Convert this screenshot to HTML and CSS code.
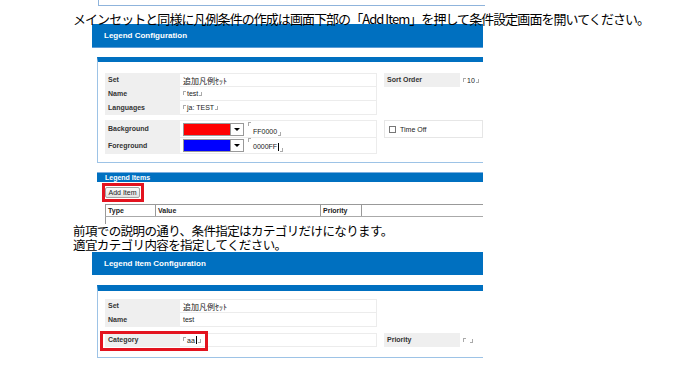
FILE: index.html
```html
<!DOCTYPE html>
<html lang="ja">
<head>
    <meta charset="UTF-8">
    <meta name="viewport" content="width=device-width, initial-scale=1.0">
    <title>凡例条件の作成</title>
    <link rel="stylesheet" href="styles.css">
</head>
<body>
    <div class="frame"></div>
    <p class="note note-top">メインセットと同様に凡例条件の作成は画面下部の「Add Item」を押して条件設定画面を開いてください。</p>

    <div class="shot">
        <div class="page-bar">Legend Configuration</div>
        <div class="panel panel-set">
            <div class="grid">
                <div class="group">
                    <div class="row"><div class="lbl">Set</div><div class="val"><span class="jp">追加凡例ｾｯﾄ</span></div></div>
                    <div class="row"><div class="lbl">Name</div><div class="val"><span class="field"><i class="mk-o"></i>test<i class="mk-c"></i></span></div></div>
                    <div class="row"><div class="lbl">Languages</div><div class="val"><span class="field"><i class="mk-o"></i>ja: TEST<i class="mk-c"></i></span></div></div>
                </div>
                <div class="group group-r">
                    <div class="row row-r"><div class="lbl">Sort Order</div><div class="val plain"><span class="field"><i class="mk-o"></i>10<i class="mk-c"></i></span></div></div>
                </div>
                <div class="group">
                    <div class="row tall">
                        <div class="lbl">Background</div>
                        <div class="val">
                            <span class="picker"><span class="swatch red"></span><span class="drop"></span></span>
                            <span class="field field-tall"><i class="mk-o"></i><span class="txt">FF0000</span><i class="mk-c"></i></span>
                        </div>
                    </div>
                    <div class="row tall">
                        <div class="lbl">Foreground</div>
                        <div class="val">
                            <span class="picker"><span class="swatch blue"></span><span class="drop"></span></span>
                            <span class="field field-tall"><i class="mk-o"></i><span class="txt">0000FF<span class="caret"></span></span><i class="mk-c"></i></span>
                        </div>
                    </div>
                </div>
                <div class="group group-r">
                    <div class="check-cell"><span class="box"></span>Time Off</div>
                </div>
            </div>
        </div>

        <div class="items">
            <div class="items-bar">Legend Items</div>
            <div class="hilite"><button type="button" class="btn">Add Item</button></div>
            <div class="table">
                <div class="thead">
                    <span>Type</span>
                    <span>Value</span>
                    <span>Priority</span>
                    <span class="last"></span>
                </div>
                <div class="tbody"></div>
            </div>
        </div>
    </div>

    <div class="note note-mid">
        <div class="line">前項での説明の通り、条件指定はカテゴリだけになります。</div>
        <div class="line">適宜カテゴリ内容を指定してください。</div>
    </div>

    <div class="shot">
        <div class="page-bar bar-two">Legend Item Configuration</div>
        <div class="panel panel-item">
            <div class="grid grid-item">
                <div class="group">
                    <div class="row"><div class="lbl">Set</div><div class="val"><span class="jp">追加凡例ｾｯﾄ</span></div></div>
                    <div class="row"><div class="lbl">Name</div><div class="val">test</div></div>
                </div>
                <div class="group group-r"></div>
                <div class="group">
                    <div class="row cat-row">
                        <div class="lbl">Category</div>
                        <div class="val"><span class="field"><i class="mk-o"></i>aa<span class="caret"></span><i class="mk-c"></i></span></div>
                        <span class="hilite-box"></span>
                    </div>
                </div>
                <div class="group group-r">
                    <div class="row row-r"><div class="lbl">Priority</div><div class="val plain"><span class="field"><i class="mk-o"></i>&nbsp;<i class="mk-c"></i></span></div></div>
                </div>
            </div>
        </div>
    </div>
</body>
</html>
```

FILE: styles.css
```css
body {
    margin: 0;
    background: #fff;
    font-family: "Liberation Sans", Arial, sans-serif;
    color: #333;
}

/* 上端に見えている前の画面の枠 */
.frame {
    margin-left: 98px;
    width: 386px;
    height: 5px;
    border-left: 1px solid #8fb4dc;
    border-bottom: 1px solid #8fb4dc;
}

.note {
    margin: 0 0 0 73px;
    color: #000;
    font-family: "Noto Sans CJK JP", sans-serif;
    font-size: 13px;
    white-space: nowrap;
}
.note-top {
    margin-top: 6px;
    height: 12px;
    line-height: 13px;
    letter-spacing: -0.95px;
}
.note-mid {
    font-size: 12.5px;
    letter-spacing: -0.6px;
}
.note-mid .line {
    height: 14px;
    line-height: 14px;
}

.shot {
    margin-left: 92px;
    width: 391px;
}

.page-bar {
    height: 23px;
    padding-left: 12px;
    background: #0070c0;
    border-bottom: 1px solid #5b9bd5;
    color: #fff;
    font-weight: bold;
    font-size: 8px;
    line-height: 23px;
}
.bar-two {
    border-bottom: none;
}

.panel {
    margin-left: 5px;
    border-top: 5px solid #0070c0;
    border-left: 1px solid #9dc3e6;
    border-bottom: 1px solid #9dc3e6;
}
.panel-item {
    margin-top: 10px;
    border-top-width: 6px;
}
.panel-set {
    margin-top: 9px;
}

.grid {
    display: grid;
    grid-template-columns: 272px 1fr;
    column-gap: 7px;
    row-gap: 5px;
    padding: 11px 0 8px 7px;
}
.grid-item {
    row-gap: 6px;
    padding: 8px 0 10px 7px;
}

.group {
    display: flex;
    flex-direction: column;
    align-self: start;
}

.row {
    display: grid;
    grid-template-columns: 75px 1fr;
    height: 14px;
}
.row.tall {
    height: 17px;
}
.row-r {
    grid-template-columns: 76px 1fr;
}

.lbl {
    padding-left: 3px;
    background: #efefef;
    font-weight: bold;
    font-size: 7px;
    line-height: 14px;
}
.tall .lbl {
    line-height: 17px;
}

.val {
    display: flex;
    align-items: center;
    padding-left: 3px;
    border-right: 1px solid #ececec;
    border-bottom: 1px solid #ececec;
    box-sizing: border-box;
    font-size: 7px;
    color: #222;
}
.group .row:first-child .val {
    border-top: 1px solid #ececec;
}
.group .row:first-child .val.plain,
.val.plain {
    border: none;
}

.jp {
    font-family: "Noto Sans CJK JP", sans-serif;
    font-size: 8px;
}

/* 入力欄の角マーク */
.field {
    display: inline-flex;
    align-items: center;
}
.mk-o,
.mk-c {
    display: inline-block;
    width: 2px;
    height: 3px;
}
.mk-o {
    margin-right: 1px;
    border-top: 1px solid #aaa;
    border-left: 1px solid #aaa;
    align-self: flex-start;
    margin-top: 1px;
}
.mk-c {
    margin-left: 1px;
    border-bottom: 1px solid #aaa;
    border-right: 1px solid #aaa;
    align-self: flex-end;
    margin-bottom: 1px;
}
.field-tall {
    height: 16px;
    margin-left: 4px;
}
.field-tall .txt {
    align-self: flex-end;
    margin-bottom: 2px;
    padding-left: 1px;
}

.caret {
    display: inline-block;
    width: 1px;
    height: 8px;
    margin-left: 1px;
    background: #000;
    vertical-align: middle;
}

.picker {
    display: inline-flex;
    height: 13px;
    border: 1px solid #999;
    box-sizing: border-box;
}
.swatch {
    width: 46px;
}
.swatch.red {
    background: #ff0000;
}
.swatch.blue {
    background: #0000ff;
}
.drop {
    position: relative;
    width: 12px;
    background: #fff;
    border-left: 1px solid #999;
}
.drop::after {
    content: "";
    position: absolute;
    left: 3px;
    top: 4px;
    border-left: 3px solid transparent;
    border-right: 3px solid transparent;
    border-top: 3px solid #000;
}

.check-cell {
    display: flex;
    align-items: center;
    gap: 4px;
    height: 18px;
    padding-left: 4px;
    border: 1px solid #e6e6e6;
    box-sizing: border-box;
    font-size: 7px;
    color: #222;
}
.box {
    width: 5px;
    height: 5px;
    border: 1px solid #777;
}

/* Legend Items */
.items {
    margin-left: 5px;
    margin-top: 9px;
}
.items-bar {
    height: 9px;
    padding-left: 8px;
    background: #0070c0;
    border-top: 1px solid #7aaedf;
    color: #fff;
    font-weight: bold;
    font-size: 7px;
    line-height: 9px;
}
.hilite {
    display: inline-block;
    margin: 1px 0 0 5px;
    padding: 1px 1px 1px 0;
    border: 3px solid #e3131f;
    vertical-align: top;
}
.btn {
    display: block;
    width: 35px;
    height: 11px;
    padding: 0;
    background: linear-gradient(#fbfbfb, #e2e2e2);
    border: 1px solid #a3a3a3;
    border-radius: 2px;
    font-family: "Liberation Sans", Arial, sans-serif;
    font-size: 7px;
    line-height: 9px;
    color: #222;
}

.table {
    margin: 2px 0 0 8px;
}
.thead {
    display: grid;
    grid-template-columns: 50px 165px 41px 1fr;
    height: 13px;
    border-top: 1px solid #999;
    border-bottom: 1px solid #aaa;
    border-left: 1px solid #999;
    box-sizing: border-box;
}
.thead span {
    padding-left: 2px;
    border-right: 1px solid #999;
    font-weight: bold;
    font-size: 7px;
    line-height: 11px;
    color: #222;
}
.thead .last {
    border-right: none;
}
.tbody {
    height: 7px;
    border-left: 1px solid #999;
}

/* Category の赤枠 */
.cat-row {
    position: relative;
}
.hilite-box {
    position: absolute;
    left: -5px;
    top: -2px;
    width: 108px;
    height: 20px;
    border: 3px solid #e3131f;
    box-sizing: border-box;
}
```
